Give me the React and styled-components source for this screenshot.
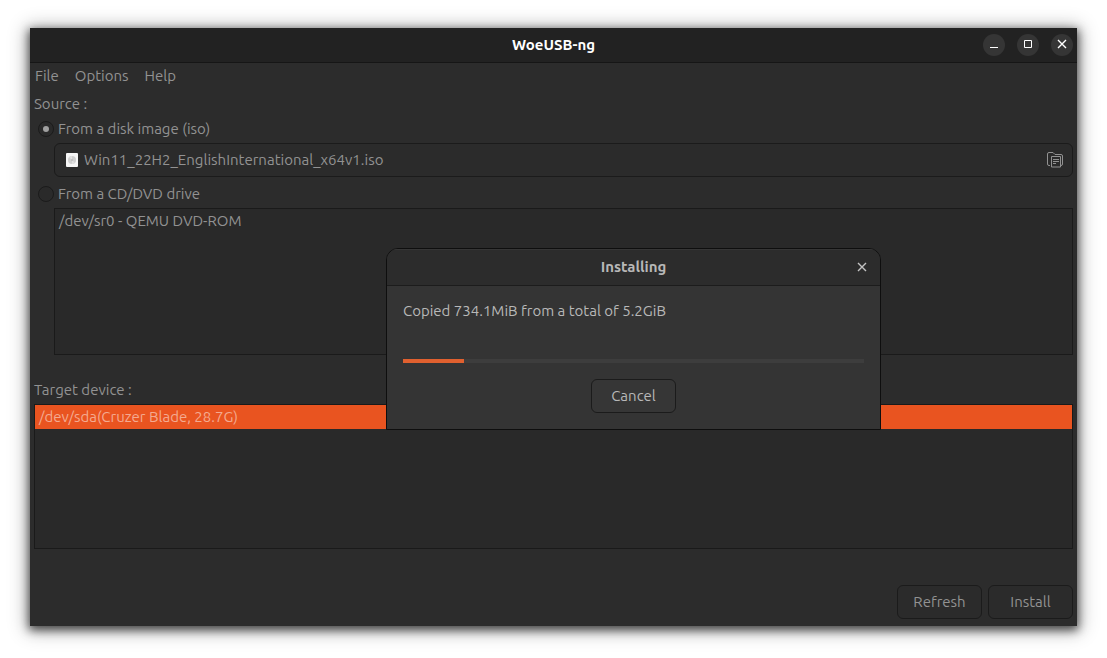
import React from "react";
import styled, { createGlobalStyle, css } from "styled-components";

const GlobalStyle = createGlobalStyle`
  *, *::before, *::after { box-sizing: border-box; }
  body {
    margin: 0;
    background: #ffffff;
    font-family: Ubuntu, "Noto Sans", "Open Sans", sans-serif;
    font-size: 15px;
    line-height: 22px;
    color: #929292;
  }
  button, input { font: inherit; color: inherit; margin: 0; }
`;

const Desktop = styled.div`
  display: flex;
  min-height: 100vh;
  padding: 28px 30px 32px;
`;

const Window = styled.main`
  position: relative;
  flex: 1;
  display: flex;
  flex-direction: column;
  background: #2c2c2c;
  box-shadow: 0 3px 9px 1px rgba(0, 0, 0, 0.65), 0 2px 18px 3px rgba(0, 0, 0, 0.3);
`;

const TitleBar = styled.header`
  display: grid;
  grid-template-columns: 1fr auto 1fr;
  align-items: center;
  height: 35px;
  padding: 0 4px;
  background: #222222;
  border-bottom: 1px solid #161616;
`;

const WindowTitle = styled.h1`
  grid-column: 2;
  margin: 0;
  font-size: 15px;
  line-height: 22px;
  font-weight: 700;
  color: #ffffff;
`;

const WindowControls = styled.div`
  display: flex;
  justify-content: flex-end;
  gap: 12px;
`;

const RoundButton = styled.button`
  display: grid;
  place-items: center;
  width: 22px;
  height: 22px;
  padding: 0;
  border: 0;
  border-radius: 50%;
  background: ${(p) => (p.$flat ? "transparent" : "#353535")};
  color: ${(p) => (p.$flat ? "#c4c4c4" : "#ffffff")};
`;

const MenuBar = styled.nav`
  display: flex;
  gap: 16px;
  padding: 2px 5px;
`;

const MenuItem = styled.button`
  padding: 0;
  border: 0;
  background: none;
`;

const Content = styled.div`
  flex: 1;
  display: flex;
  flex-direction: column;
  padding: 3px 4px 7px;
`;

const SectionLabel = styled.h2`
  margin: 0;
  font-size: 15px;
  font-weight: 400;
  line-height: 24px;
`;

const RadioRow = styled.label`
  display: flex;
  align-items: center;
  gap: 4px;
  height: 24px;
  padding-left: 4px;
`;

const Radio = styled.input`
  appearance: none;
  display: grid;
  place-items: center;
  width: 16px;
  height: 16px;
  border: 1px solid #1b1b1b;
  border-radius: 50%;
  background: #2a2a2a;

  &:checked::before {
    content: "";
    width: 6px;
    height: 6px;
    border-radius: 50%;
    background: #a0a0a0;
  }
`;

const Source = styled.section`
  display: flex;
  flex-direction: column;
  gap: 2px;
  margin-top: 1px;
`;

const FilePicker = styled.button`
  display: flex;
  align-items: center;
  gap: 6px;
  height: 34px;
  margin: 0 0 3px 20px;
  padding: 0 9px 0 11px;
  border: 1px solid #1b1b1b;
  border-radius: 6px;
  background: #2b2b2b;
  text-align: left;
`;

const FileName = styled.span`
  flex: 1;
`;

const DeviceList = styled.ul`
  margin: 0;
  padding: 0;
  list-style: none;
  background: #292929;
  border: 1px solid #1a1a1a;
  ${(p) =>
    p.$nested
      ? css`
          height: 147px;
          margin-left: 20px;
        `
      : css`
          flex: 1;
          min-height: 120px;
          margin-top: 2px;
        `}
`;

const Device = styled.li`
  padding: 0 4px;
  line-height: 24px;
  ${(p) =>
    p["aria-selected"] &&
    css`
      background: #e95420;
      color: #f4aa90;
    `}
`;

const Target = styled.section`
  flex: 1;
  display: flex;
  flex-direction: column;
  margin-top: 23px;
`;

const Actions = styled.footer`
  display: flex;
  justify-content: flex-end;
  gap: 6px;
  margin-top: 36px;
`;

const PushButton = styled.button`
  min-width: 85px;
  height: 34px;
  padding: 0 12px;
  border: 1px solid #1b1b1b;
  border-radius: 6px;
  background: ${(p) => (p.$raised ? "#363636" : "#2b2b2b")};
`;

const Dialog = styled.section`
  position: absolute;
  top: 220px;
  left: 34%;
  width: 495px;
  overflow: hidden;
  border: 1px solid #0e0e0e;
  border-radius: 12px 12px 0 0;
  background: #343434;
  color: #b8b8b8;
`;

const DialogHeader = styled.header`
  display: grid;
  grid-template-columns: 1fr auto 1fr;
  align-items: center;
  justify-items: end;
  height: 37px;
  padding: 0 7px;
  background: #2c2c2c;
  border-bottom: 1px solid #1c1c1c;
  box-shadow: inset 0 1px #363636;
`;

const DialogTitle = styled.h2`
  grid-column: 2;
  margin: 0;
  font-size: 15px;
  line-height: 22px;
  font-weight: 700;
`;

const DialogBody = styled.div`
  display: flex;
  flex-direction: column;
  align-items: center;
  gap: 16px;
  padding: 14px 16px 16px;
`;

const Message = styled.p`
  align-self: stretch;
  margin: 0 0 21px;
`;

const Progress = styled.progress`
  appearance: none;
  display: block;
  width: 100%;
  height: 4px;
  border: 0;
  background: #3d3d3d;

  &::-webkit-progress-bar { background: #3d3d3d; }
  &::-webkit-progress-value { background: #e0602f; }
`;

const Glyph = ({ children }) => (
  <svg width="16" height="16" viewBox="0 0 16 16" fill="none" stroke="currentColor" aria-hidden="true">
    {children}
  </svg>
);

const CrossGlyph = () => (
  <Glyph>
    <path d="M4 4l8 8M12 4l-8 8" strokeWidth="1.4" />
  </Glyph>
);

const DiscImageIcon = () => (
  <svg width="12" height="14" viewBox="0 0 12 14" aria-hidden="true">
    <rect width="12" height="14" rx="1" fill="#f6f6f6" />
    <circle cx="6" cy="7" r="4" fill="#cfcfcf" />
    <path d="M6 7L3.2 4.2A4 4 0 0 1 6 3zM6 7l2.8 2.8A4 4 0 0 1 6 11z" fill="#e0e0e0" />
    <circle cx="6" cy="7" r="1" fill="#bababa" />
  </svg>
);

const FolderDocumentIcon = () => (
  <svg width="16" height="16" viewBox="0 0 16 16" fill="none" stroke="#929292" aria-hidden="true">
    <path d="M3 13.500H2A1.500 1.500 0 0 1 .5 12V2A1.500 1.500 0 0 1 2 .5h4l2 2h6A1.500 1.500 0 0 1 15.500 4v8a1.500 1.500 0 0 1-1.500 1.500" />
    <path d="M4.500 4.500h9v10.500h-9z" />
    <path d="M6 7.500h6M6 9.500h6M6 11.500h3" />
  </svg>
);

export default function App() {
  return (
    <>
      <GlobalStyle />
      <Desktop>
        <Window>
          <TitleBar>
            <WindowTitle>WoeUSB-ng</WindowTitle>
            <WindowControls>
              <RoundButton aria-label="Minimize">
                <Glyph><path d="M4 10.500h8" /></Glyph>
              </RoundButton>
              <RoundButton aria-label="Maximize">
                <Glyph><path d="M4.500 3.500h7v7h-7z" /></Glyph>
              </RoundButton>
              <RoundButton aria-label="Close">
                <Glyph><path d="M4 3l8 8M12 3l-8 8" strokeWidth="1.4" /></Glyph>
              </RoundButton>
            </WindowControls>
          </TitleBar>

          <MenuBar aria-label="Main menu">
            <MenuItem>File</MenuItem>
            <MenuItem>Options</MenuItem>
            <MenuItem>Help</MenuItem>
          </MenuBar>

          <Content>
            <SectionLabel>Source :</SectionLabel>
            <Source>
              <RadioRow>
                <Radio type="radio" name="source" defaultChecked />
                From a disk image (iso)
              </RadioRow>
              <FilePicker>
                <DiscImageIcon />
                <FileName>Win11_22H2_EnglishInternational_x64v1.iso</FileName>
                <FolderDocumentIcon />
              </FilePicker>
              <RadioRow>
                <Radio type="radio" name="source" />
                From a CD/DVD drive
              </RadioRow>
              <DeviceList $nested role="listbox" aria-label="CD/DVD drive">
                <Device role="option" aria-selected={false}>/dev/sr0 - QEMU DVD-ROM</Device>
              </DeviceList>
            </Source>

            <Target>
              <SectionLabel id="target-label">Target device :</SectionLabel>
              <DeviceList role="listbox" aria-labelledby="target-label">
                <Device role="option" aria-selected={true}>/dev/sda(Cruzer Blade, 28.7G)</Device>
              </DeviceList>
            </Target>

            <Actions>
              <PushButton>Refresh</PushButton>
              <PushButton>Install</PushButton>
            </Actions>
          </Content>

          <Dialog role="dialog" aria-labelledby="dialog-title">
            <DialogHeader>
              <DialogTitle id="dialog-title">Installing</DialogTitle>
              <RoundButton $flat aria-label="Close dialog">
                <CrossGlyph />
              </RoundButton>
            </DialogHeader>
            <DialogBody>
              <Message id="progress-label">Copied 734.1MiB from a total of 5.2GiB</Message>
              <Progress value="61" max="461" aria-labelledby="progress-label" />
              <PushButton $raised>Cancel</PushButton>
            </DialogBody>
          </Dialog>
        </Window>
      </Desktop>
    </>
  );
}
